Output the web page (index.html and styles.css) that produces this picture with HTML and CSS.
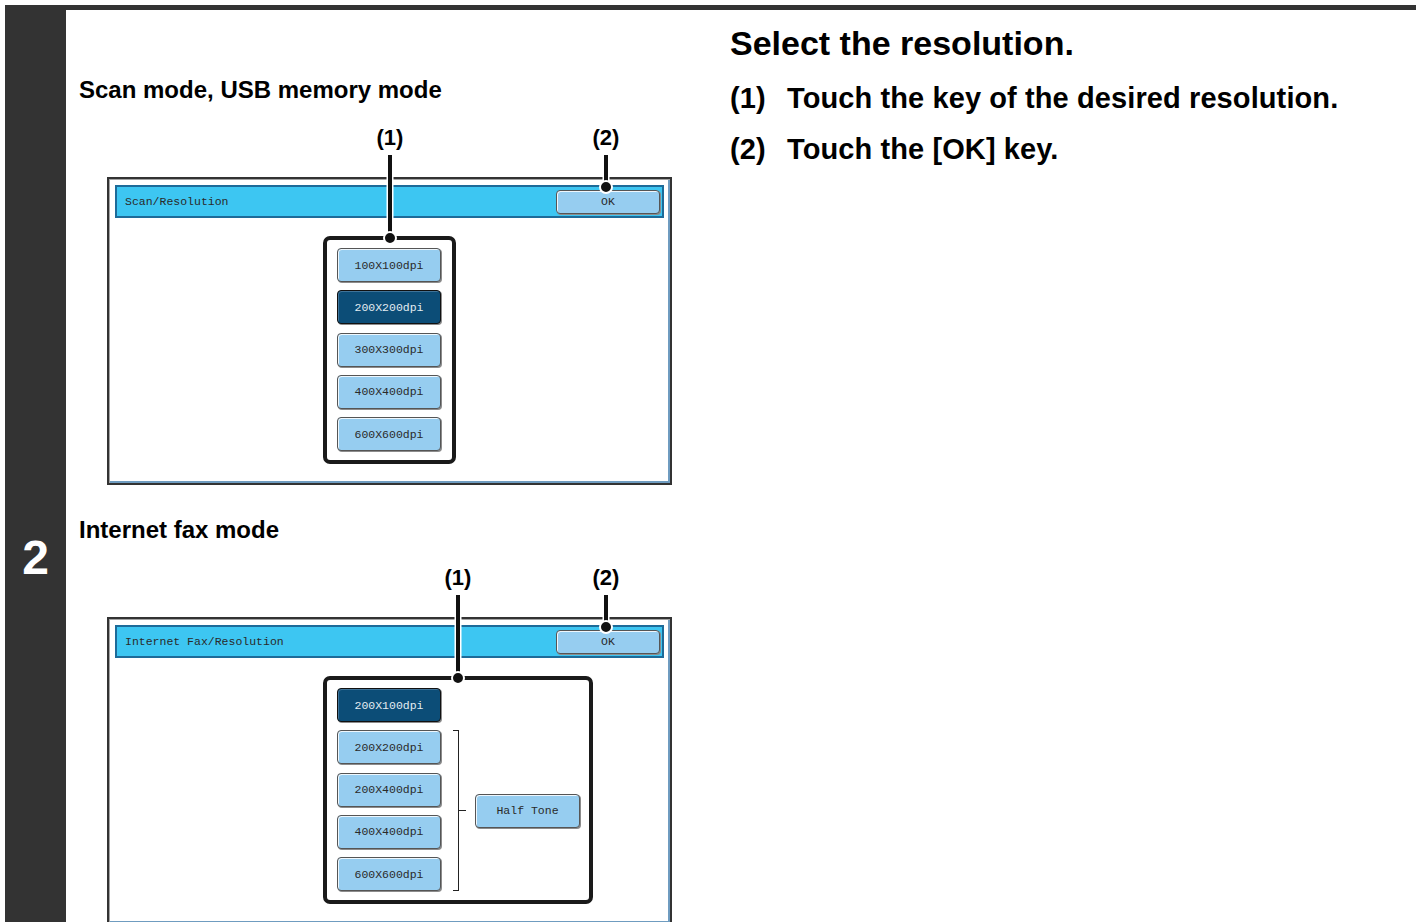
FILE: index.html
```html
<!DOCTYPE html>
<html lang="en">
<head>
    <meta charset="UTF-8">
    <meta name="viewport" content="width=device-width, initial-scale=1.0">
    <title>Select the resolution</title>
    <link rel="stylesheet" href="styles.css">
</head>
<body>

<div class="step">
    <div class="step-num">2</div>

    <div class="figures">
        <!-- scan / usb -->
        <div class="fig">
            <h3 class="fig-title">Scan mode, USB memory mode</h3>
            <div class="screen">
                <div class="bar">
                    <span class="bar-title">Scan/Resolution</span>
                    <span class="key key-ok">OK</span>
                </div>
                <div class="callout">
                    <span class="key">100X100dpi</span>
                    <span class="key key-on">200X200dpi</span>
                    <span class="key">300X300dpi</span>
                    <span class="key">400X400dpi</span>
                    <span class="key">600X600dpi</span>
                </div>
            </div>
            <span class="label x-box1">(1)</span>
            <span class="lead lead-box x-box1"></span>
            <span class="dot dot-box x-box1"></span>
            <span class="label x-ok">(2)</span>
            <span class="lead lead-ok x-ok"></span>
            <span class="dot dot-ok x-ok"></span>
        </div>

        <!-- internet fax -->
        <div class="fig">
            <h3 class="fig-title">Internet fax mode</h3>
            <div class="screen">
                <div class="bar">
                    <span class="bar-title">Internet Fax/Resolution</span>
                    <span class="key key-ok">OK</span>
                </div>
                <div class="callout callout-wide">
                    <span class="key key-on">200X100dpi</span>
                    <span class="key">200X200dpi</span>
                    <span class="key">200X400dpi</span>
                    <span class="key">400X400dpi</span>
                    <span class="key">600X600dpi</span>
                    <div class="tone">
                        <span class="bracket"></span>
                        <span class="tick"></span>
                        <span class="key key-tone">Half Tone</span>
                    </div>
                </div>
            </div>
            <span class="label x-box2">(1)</span>
            <span class="lead lead-box x-box2"></span>
            <span class="dot dot-box x-box2"></span>
            <span class="label x-ok">(2)</span>
            <span class="lead lead-ok x-ok"></span>
            <span class="dot dot-ok x-ok"></span>
        </div>
    </div>

    <div class="text">
        <h2>Select the resolution.</h2>
        <ol>
            <li><span class="num">(1)</span>Touch the key of the desired resolution.</li>
            <li><span class="num">(2)</span>Touch the [OK] key.</li>
        </ol>
    </div>
</div>

</body>
</html>
```

FILE: styles.css
```css
body {
    margin: 5px 0 0 5px;
    font-family: "Liberation Sans", Arial, sans-serif;
    color: #000;
    background: #fff;
}
.step {
    display: grid;
    grid-template-columns: 61px 664px 1fr;
    border-top: 5px solid #333;
    min-height: 917px;
}
.step-num {
    background: #333;
    color: #fff;
    font-size: 48px;
    line-height: 48px;
    font-weight: bold;
    text-align: center;
    padding-top: 524px;
}

/* left: screens */
.figures {
    display: flex;
    flex-direction: column;
    gap: 32px;
    padding: 67px 0 0 13px;
}
.fig {
    position: relative;
}
.fig-title {
    margin: 0;
    font-size: 24px;
    line-height: 26px;
    font-weight: bold;
}
.screen {
    width: 565px;
    height: 308px;
    box-sizing: border-box;
    margin: 74px 0 0 28px;
    padding: 6px;
    border: 2px solid #333;
    box-shadow: inset 1px 1px 0 #a3a3a3, inset -2px -2px 0 #6f9cc0;
}
.bar {
    display: flex;
    align-items: center;
    justify-content: space-between;
    height: 33px;
    box-sizing: border-box;
    padding: 0 2px 0 8px;
    border: 2px solid #1d6b99;
    background: #3dc6f2;
}
.bar-title {
    font: 11.5px "Liberation Mono", monospace;
    color: #2a2a2a;
}
.key {
    display: flex;
    align-items: center;
    justify-content: center;
    width: 104px;
    height: 34px;
    box-sizing: border-box;
    background: #96cdf0;
    border: 1px solid #555;
    border-radius: 4px;
    box-shadow: inset 1px 1px 0 #eef7fd, 1px 1px 0 #8c8c8c;
    font: 11.5px "Liberation Mono", monospace;
    color: #2a2a2a;
}
.key-ok {
    height: 24px;
}
.key-on {
    background: #0c4d77;
    border-color: #111;
    color: #e3ecf2;
    box-shadow: inset 1px 1px 0 #3f7398, 1px 1px 0 #8c8c8c;
}
.callout {
    display: grid;
    grid-template-columns: 104px auto;
    grid-auto-rows: 34px;
    row-gap: 8.25px;
    align-content: start;
    width: 133px;
    height: 228px;
    box-sizing: border-box;
    margin: 18px 0 0 208px;
    padding: 8px 0 0 10px;
    border: 4px solid #1a1a1a;
    border-radius: 7px;
}
.callout-wide {
    width: 270px;
}
.callout .key {
    grid-column: 1;
}
.callout .tone {
    grid-column: 2;
    grid-row: 2 / 6;
    display: flex;
    align-items: center;
    margin-left: 12px;
}
.bracket {
    align-self: stretch;
    width: 6px;
    box-sizing: border-box;
    border: 1.5px solid #222;
    border-left: 0;
}
.tick {
    width: 7px;
    border-top: 1.5px solid #222;
}
.callout .key-tone {
    width: 105px;
    margin-left: 9px;
}

/* callouts over the screens */
.label {
    position: absolute;
    top: 50px;
    width: 40px;
    margin-left: -20px;
    text-align: center;
    font-size: 22px;
    line-height: 22px;
    font-weight: bold;
}
.lead {
    position: absolute;
    top: 78px;
    width: 4px;
    margin-left: -2px;
    background: #111;
    box-shadow: 0 0 0 1.5px #fff;
}
.lead-box { height: 83px; }
.lead-ok { height: 32px; }
.dot {
    position: absolute;
    width: 10px;
    height: 10px;
    margin: -7px 0 0 -7px;
    border: 2px solid #fff;
    border-radius: 50%;
    background: #111;
}
.dot-box { top: 161px; }
.dot-ok { top: 110px; }
.x-box1 { left: 311px; }
.x-box2 { left: 379px; }
.x-ok { left: 527px; }

/* right: instructions */
.text {
    padding-top: 13px;
}
.text h2 {
    margin: 0;
    font-size: 34px;
    line-height: 40px;
}
.text ol {
    display: flex;
    flex-direction: column;
    gap: 17px;
    margin: 18px 0 0;
    padding: 0;
    list-style: none;
}
.text li {
    display: flex;
    font-size: 29px;
    line-height: 34px;
    font-weight: bold;
    letter-spacing: 0.1px;
}
.num {
    flex: none;
    width: 57px;
}
```
